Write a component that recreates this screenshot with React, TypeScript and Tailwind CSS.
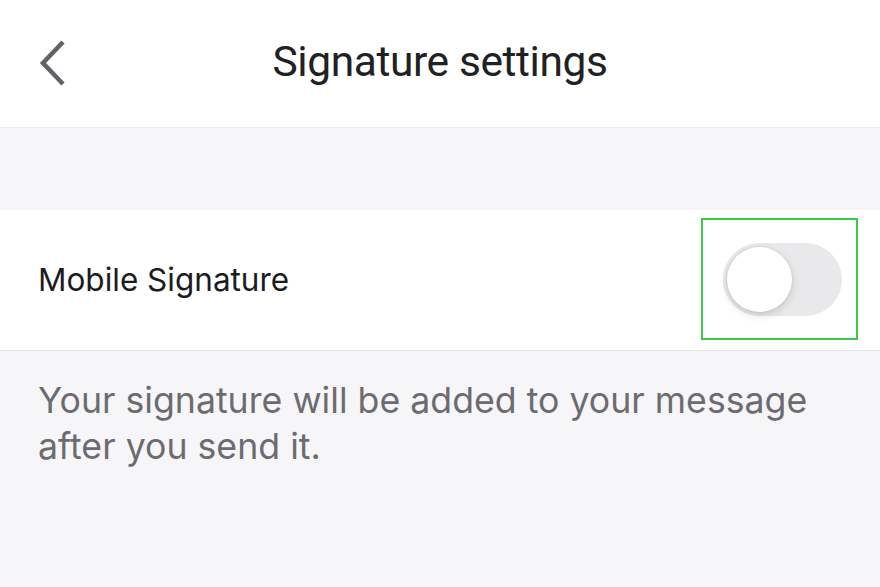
export default function App() {
  return (
    <div className="w-[880px] h-[587px] bg-[#f6f6f8] flex flex-col overflow-hidden" style={{ fontFamily: "Roboto, 'Liberation Sans', sans-serif" }}>
      {/* Header */}
      <div className="h-[128px] shrink-0 bg-white border-b border-[#ebebed] relative flex items-center justify-center">
        <button className="absolute left-[34px] top-[38px] w-[36px] h-[50px] flex items-center justify-center">
          <svg width="34" height="48" viewBox="0 0 34 48" fill="none">
            <path d="M28 3L8 24l20 21" stroke="#5f6368" strokeWidth="4.5" strokeLinecap="butt" strokeLinejoin="miter" />
          </svg>
        </button>
        <h1 className="text-[42.5px] text-[#202124] tracking-[-0.4px] -mt-[4px]">Signature settings</h1>
      </div>

      <div className="h-[82px] shrink-0" />

      {/* Toggle row */}
      <div className="h-[141px] shrink-0 bg-white border-b border-[#e6e6e8] flex items-center justify-between pl-[38px] pr-[22px]">
        <span className="text-[31.5px] text-[#1c1c1e]" style={{ fontFamily: "Inter, Roboto, sans-serif" }}>Mobile Signature</span>
        <div className="w-[157px] h-[122px] border-2 border-[#3cc84a] flex items-center justify-center -mt-[2px]">
          <div className="w-[119px] h-[73px] rounded-full bg-[#e9e9eb] p-[4px] flex items-center ml-[5px]">
            <div className="w-[65px] h-[65px] rounded-full bg-white shadow-[0_3px_8px_rgba(0,0,0,0.15),0_0_0_1px_rgba(0,0,0,0.04)]" />
          </div>
        </div>
      </div>

      {/* Footer text */}
      <p className="pl-[38px] pr-[30px] pt-[26px] text-[35.7px] leading-[46px] text-[#6c6c70]" style={{ fontFamily: "Inter, Roboto, sans-serif" }}>
        Your signature will be added to your message after you send it.
      </p>
    </div>
  );
}
